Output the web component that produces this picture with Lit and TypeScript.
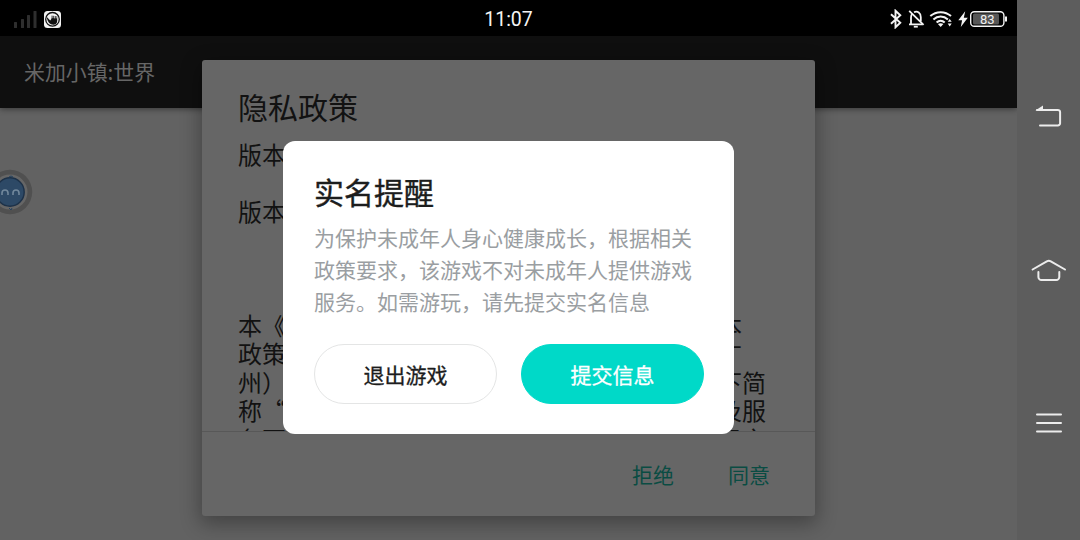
import {html, css, svg, LitElement} from 'lit';
import {customElement, property} from 'lit/decorators.js';

const font = css`'Noto Sans CJK SC', 'Noto Sans', sans-serif`;

@customElement('status-bar')
export class StatusBar extends LitElement {
  @property() time = '';
  @property({type: Number}) battery = 0;

  static styles = css`
    :host {
      display: grid;
      grid-template-columns: 1fr auto 1fr;
      align-items: center;
      height: 36px;
      box-sizing: border-box;
      padding: 0 9px 0 14px;
      background: #000;
      color: #f4f4f4;
      font-family: Roboto, sans-serif;
    }

    .left,
    .right {
      display: flex;
      align-items: center;
    }

    .left {
      gap: 7px;
    }

    .right {
      justify-content: flex-end;
    }

    .time {
      font-size: 19.5px;
      line-height: 36px;
      padding: 2px 5px 0 0;
    }

    svg {
      display: block;
    }

    .battery-text {
      font-family: Roboto, sans-serif;
      font-size: 13px;
      fill: #f0f0f0;
    }
  `;

  render() {
    return html`
      <div class="left">
        <svg width="23" height="17" viewBox="0 0 23 17" fill="#2e2e2e">
          <rect x="0" y="11" width="3" height="6" rx="0.5" />
          <rect x="7" y="8" width="3" height="9" rx="0.5" />
          <rect x="13" y="4" width="3" height="13" rx="0.5" />
          <rect x="19.5" y="0" width="3" height="17" rx="0.5" />
        </svg>
        <svg width="17" height="17" viewBox="0 0 17 17">
          <rect width="17" height="17" rx="3.5" fill="#f2f2f2" />
          <circle cx="8.5" cy="8.3" r="6.8" fill="none" stroke="#111" stroke-width="1.3" />
          <path
            d="M2.6 5.8l3.6 3.6 1-1.2V4.6l6 .6v4.5c0 2.4-1.5 4-3.9 4-3.4 0-5.8-2.6-6.7-7.9z"
            fill="#111"
          />
          <path d="M7.2 3.5v4M8.9 3.2v4M10.6 3.4v4M12.2 4.4v3" stroke="#f2f2f2" stroke-width=".8" />
        </svg>
      </div>
      <div class="time">${this.time}</div>
      <div class="right">
        <svg width="119" height="20" viewBox="0 0 119 20" fill="none" stroke="#f4f4f4">
          <path d="M2 5.2l9.3 8.5-4.8 4.6V1.7l4.8 4.5L2 14.7" stroke-width="1.9" />
          <g stroke-width="1.8">
            <path d="M20 15.4h13.4M22 15.4V8.4c0-1.6.5-2.8 1.4-3.7M25 3.3c3.6-1.8 6.8.8 6.8 4.9v4.2" />
            <path d="M20.2 1.8l14.4 14" />
            <path d="M24.8 17.7h4" />
          </g>
          <g stroke-width="2">
            <path d="M41.3 7.1c5.8-5.3 14.9-5.3 20.7 0" />
            <path d="M44.4 10.4c4.2-3.9 10.3-3.9 14.5 0" />
            <path d="M47.6 13.5c2.4-2.2 5.7-2.2 8.1 0" />
          </g>
          <path
            d="M48.9 15.1c1.7-1.3 3.8-1.3 5.5 0l-2.7 2.8zM58.7 12.7l2-2.6 2 2.6zM58.7 14.6h4l-2 2.8z"
            fill="#f4f4f4"
            stroke="none"
          />
          <path d="M76.2 2.2l-6.9 9h3.8l-1.3 6.8 7-9.2h-4z" fill="#f4f4f4" stroke="none" />
          <rect x="84" y="4.5" width="26" height="11" rx="1.5" fill="#565656" stroke="none" />
          <rect x="81.7" y="2.7" width="33.2" height="14.6" rx="3.6" stroke-width="1.4" />
          <path d="M117 7.4v5" stroke-width="2" />
          <text class="battery-text" x="98.2" y="14.6" text-anchor="middle" stroke="none">
            ${this.battery}
          </text>
        </svg>
      </div>
    `;
  }
}

@customElement('policy-dialog')
export class PolicyDialog extends LitElement {
  @property({attribute: false}) lines: string[][] = [];

  static styles = css`
    :host {
      display: flex;
      flex-direction: column;
      box-sizing: border-box;
      width: 613px;
      height: 456px;
      border-radius: 3px;
      background: #666;
      box-shadow: 0 6px 20px 2px rgba(0, 0, 0, 0.32);
      color: #121212;
      font-family: ${font};
    }

    .title {
      padding: 24px 36px 0;
      font-size: 30px;
      line-height: 44px;
    }

    .text {
      flex: 1;
      min-height: 0;
      overflow: hidden;
      margin-top: 11.5px;
      padding: 0 36px;
      font-size: 24px;
      line-height: 28.5px;
      white-space: nowrap;
      border-bottom: 1px solid #585858;
    }

    .line {
      display: flex;
      justify-content: space-between;
      width: 528px;
      height: 28.5px;
    }

    .tail {
      width: 48px;
    }

    .actions {
      display: flex;
      justify-content: flex-end;
      align-items: center;
      gap: 54px;
      height: 84px;
      padding: 0 45px 0 0;
      font-size: 21px;
      color: #0a4c43;
    }
  `;

  render() {
    return html`
      <div class="title">隐私政策</div>
      <div class="text">
        ${this.lines.map(
          ([head, tail]) => html`
            <div class="line">
              <span>${head}</span>
              <span class="tail">${tail}</span>
            </div>
          `
        )}
      </div>
      <div class="actions">
        <span>拒绝</span>
        <span>同意</span>
      </div>
    `;
  }
}

@customElement('real-name-dialog')
export class RealNameDialog extends LitElement {
  static styles = css`
    :host {
      display: flex;
      flex-direction: column;
      box-sizing: border-box;
      width: 451px;
      height: 293px;
      padding: 28px 30px 30px 31px;
      border-radius: 12px;
      background: #fff;
      font-family: ${font};
    }

    .title {
      font-size: 30px;
      line-height: 44px;
      color: #1c1d1d;
      -webkit-text-stroke: 0.4px #1c1d1d;
    }

    .message {
      margin-top: 8px;
      font-size: 21px;
      line-height: 32px;
      color: #9a9ea2;
      white-space: nowrap;
    }

    .buttons {
      display: flex;
      gap: 24px;
      margin-top: 27px;
    }

    button {
      flex: 1;
      box-sizing: border-box;
      height: 60px;
      padding: 0;
      border: 1.5px solid #e4e5e5;
      border-radius: 30px;
      background: #fff;
      color: #1c1d1d;
      font-family: inherit;
      font-size: 21px;
      -webkit-text-stroke: 0.3px currentColor;
    }

    button.primary {
      border-color: #00d9c8;
      background: #00d9c8;
      color: #fff;
    }
  `;

  render() {
    return html`
      <div class="title">实名提醒</div>
      <div class="message">
        为保护未成年人身心健康成长，根据相关<br />政策要求，该游戏不对未成年人提供游戏<br />服务。如需游玩，请先提交实名信息
      </div>
      <div class="buttons">
        <button>退出游戏</button>
        <button class="primary">提交信息</button>
      </div>
    `;
  }
}

@customElement('nav-rail')
export class NavRail extends LitElement {
  static styles = css`
    :host {
      display: flex;
      flex-direction: column;
      align-items: center;
      justify-content: space-between;
      box-sizing: border-box;
      width: 63px;
      padding: 99px 0 99px;
      background: #5d5d5d;
    }

    svg {
      display: block;
      fill: none;
      stroke: #ececec;
      stroke-width: 2;
      stroke-linecap: round;
      stroke-linejoin: round;
    }
  `;

  icon(shape: unknown) {
    return html`<svg width="36" height="36" viewBox="0 0 36 36">${shape}</svg>`;
  }

  render() {
    return html`
      ${this.icon(svg`
        <path d="M9 26.5h17.8a2.3 2.3 0 0 0 2.3-2.3V13.2a2.3 2.3 0 0 0-2.3-2.3H6" />
        <path d="M4.4 11.4l7.6-4.8v4.8z" fill="#ececec" stroke="none" />
      `)}
      ${this.icon(svg`
        <path d="M1.6 17.5l14.2-8.2q2-1 4 0l14.2 8.2" />
        <path d="M7.4 20v5a3 3 0 0 0 3 3h14.9a3 3 0 0 0 3-3v-5" />
      `)}
      ${this.icon(svg`<path d="M6 9.5h24M6 18h24M6 26.5h24" />`)}
    `;
  }
}

@customElement('app-root')
export class AppRoot extends LitElement {
  static styles = css`
    :host {
      display: flex;
      width: 1080px;
      height: 540px;
      overflow: hidden;
      background: #626262;
      font-family: ${font};
    }

    .screen {
      position: relative;
      display: flex;
      flex-direction: column;
      width: 1017px;
      overflow: hidden;
    }

    .app-bar {
      display: flex;
      align-items: center;
      height: 72px;
      box-sizing: border-box;
      padding: 0 24px 2px;
      background: #0f0f0f;
      box-shadow: 0 1px 6px rgba(0, 0, 0, 0.45);
      color: #666;
      font-size: 20.9px;
    }

    .assistant {
      position: absolute;
      left: -13px;
      top: 169px;
    }

    policy-dialog {
      position: absolute;
      left: 202px;
      top: 60px;
    }

    real-name-dialog {
      position: absolute;
      left: 283px;
      top: 141px;
    }
  `;

  // Start and end of each wrapped row; the middle lies under the reminder
  policy = [
    ['版本'],
    [],
    ['版本'],
    [],
    [],
    [],
    ['本《', '本'],
    ['政策', '广'],
    ['州）', '下简'],
    ['称“', '及服'],
    ['务百', '足之'],
  ];

  render() {
    return html`
      <div class="screen">
        <status-bar time="11:07" battery="83"></status-bar>
        <div class="app-bar">米加小镇:世界</div>
        <svg class="assistant" width="46" height="46" viewBox="0 0 46 46">
          <circle cx="23" cy="23" r="22.2" fill="#505050" />
          <circle cx="23" cy="23" r="17.5" fill="#666" />
          <circle cx="23" cy="23" r="14.2" fill="#2d4966" stroke="#1d3148" stroke-width="1.4" />
          <path d="M22 8q2-2 4 0M22 39l2 2 1-2" stroke="#24415e" fill="none" />
          <path
            d="M15 26v-2a3 3 0 0 1 6 0v2M26 26v-2a3 3 0 0 1 6 0v2"
            fill="none"
            stroke="#72889c"
            stroke-width="1.6"
          />
        </svg>
        <policy-dialog .lines=${this.policy}></policy-dialog>
        <real-name-dialog></real-name-dialog>
      </div>
      <nav-rail></nav-rail>
    `;
  }
}
